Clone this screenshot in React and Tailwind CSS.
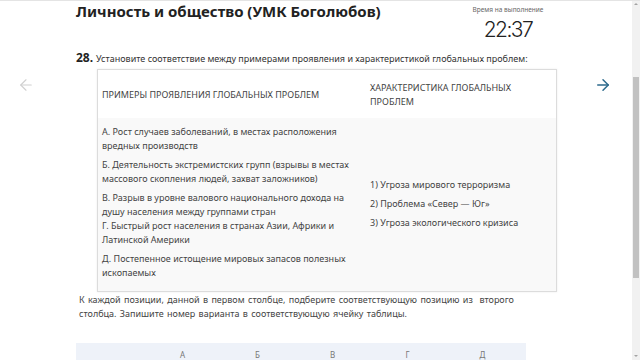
import React from 'react';
import { ArrowLeft, ArrowRight } from 'lucide-react';

// ─── Data ──────────────────────────────────────────────
const examples = [
  ['А. Рост случаев заболеваний, в местах расположения вредных производств'],
  ['Б. Деятельность экстремистских групп (взрывы в местах массового скопления людей, захват заложников)'],
  [
    'В. Разрыв в уровне валового национального дохода на душу населения между группами стран',
    'Г. Быстрый рост населения в странах Азии, Африки и Латинской Америки',
  ],
  ['Д. Постепенное истощение мировых запасов полезных ископаемых'],
];

const features = [
  '1) Угроза мирового терроризма',
  '2) Проблема «Север — Юг»',
  '3) Угроза экологического кризиса',
];

const letters = ['А', 'Б', 'В', 'Г', 'Д'];

// ─── Fake scrollbar ────────────────────────────────────
function Scrollbar() {
  return (
    <div className="w-2 h-full bg-[#f1f1f1] flex flex-col items-center">
      <div className="h-[6px] flex items-center justify-center">
        <div className="w-0 h-0 border-l-[2px] border-r-[2px] border-b-[2px] border-l-transparent border-r-transparent border-b-[#a3a3a3]" />
      </div>
      <div className="h-[70px]" />
      <div className="w-[6px] h-[201px] bg-[#c1c1c1]" />
      <div className="flex-1" />
      <div className="h-[8px] flex items-center justify-center">
        <div className="w-0 h-0 border-l-[2px] border-r-[2px] border-t-[2px] border-l-transparent border-r-transparent border-t-[#a3a3a3]" />
      </div>
    </div>
  );
}

export default function App() {
  return (
    <div className="w-[640px] h-[360px] overflow-hidden bg-white flex font-['Noto_Sans',sans-serif] border-t border-[#e4e4e4]">
      {/* Left gutter */}
      <div className="w-[76px] shrink-0 flex justify-center pt-[75px] pr-[24px]">
        <ArrowLeft size={18} strokeWidth={1.5} className="text-[#d0d0d0]" />
      </div>

      {/* Content */}
      <div className="w-[481px] shrink-0 self-start flex flex-col">
        {/* Header */}
        <div className="flex justify-between h-[50px]">
          <h1 className="text-[15px] leading-[20px] font-bold text-[#222]">
            Личность и общество (УМК Боголюбов)
          </h1>
          <div className="flex flex-col items-center w-[90px] pr-[8px] pt-[4px]">
            <div className="text-[6.5px] leading-[9px] text-[#666]">Время на выполнение</div>
            <div className="mt-[4px] text-[21px] leading-[24px] font-light tracking-[-1.5px] text-[#222] font-['Inter',sans-serif]">22:37</div>
          </div>
        </div>

        {/* Question */}
        <div className="flex items-baseline gap-[3px] h-[14px]">
          <span className="text-[12px] leading-[14px] font-bold text-[#222]">28.</span>
          <span className="text-[9px] leading-[14px] text-[#333]">
            Установите соответствие между примерами проявления и характеристикой глобальных проблем:
          </span>
        </div>

        {/* Matching table */}
        <div className="mt-[4px] ml-[21px] w-[460px] border border-[#dcdcdc] shadow-[0_0_2px_rgba(0,0,0,0.08)] text-[9px] leading-[14px] text-[#444]">
          <div className="grid grid-cols-[272px_1fr] h-[48px] bg-white items-center">
            <div className="pl-[4px] pt-[2px]">ПРИМЕРЫ ПРОЯВЛЕНИЯ ГЛОБАЛЬНЫХ ПРОБЛЕМ</div>
            <div className="pr-[20px] pt-[1px]">ХАРАКТЕРИСТИКА ГЛОБАЛЬНЫХ ПРОБЛЕМ</div>
          </div>
          <div className="grid grid-cols-[272px_1fr] bg-[#f9f9f9] h-[173px]">
            <div className="pl-[4px] pr-[16px] pt-[7px] flex flex-col gap-[5px]">
              {examples.map((group, i) => (
                <div key={i}>
                  {group.map((line, j) => (
                    <div key={j}>{line}</div>
                  ))}
                </div>
              ))}
            </div>
            <div className="flex flex-col justify-center gap-[5px] pb-[2px]">
              {features.map((f, i) => (
                <div key={i}>{f}</div>
              ))}
            </div>
          </div>
        </div>

        {/* Instruction */}
        <div className="ml-[3px] mt-[1px] text-[9px] leading-[14px] text-[#444] [word-spacing:1px]">
          К каждой позиции, данной в первом столбце, подберите соответствующую позицию из&nbsp; второго<br />
          столбца. Запишите номер варианта в соответствующую ячейку таблицы.
        </div>

        {/* Answer table */}
        <div className="mt-[22px] w-[450px] bg-[#eef2f9] pt-[8px] h-[40px] grid grid-cols-[69px_repeat(5,75px)] text-[8px] leading-[8px] text-[#777]">
          <div />
          {letters.map(l => (
            <div key={l} className="text-center">{l}</div>
          ))}
        </div>
      </div>

      {/* Right gutter */}
      <div className="flex-1 flex justify-center pt-[75px] pl-[16px]">
        <ArrowRight size={18} strokeWidth={2} className="text-[#2c6a8c]" />
      </div>

      <Scrollbar />
    </div>
  );
}
